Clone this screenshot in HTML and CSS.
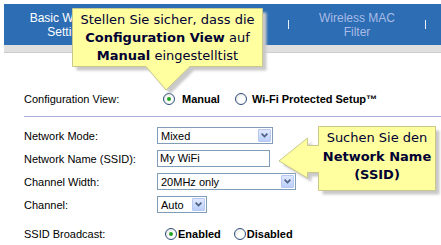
FILE: index.html
```html
<!DOCTYPE html>
<html>
<head>
<meta charset="utf-8">
<link rel="stylesheet" href="styles.css">
</head>
<body>
<div class="header">
  <div class="tabs">
    <div class="tab active">Basic Wireless<br>Settings</div>
    <div class="tab-gap"></div>
    <div class="sep"></div>
    <div class="tab mac">Wireless MAC<br>Filter</div>
    <div class="sep"></div>
  </div>
  <div class="strip"></div>
</div>

<div class="form">
  <div class="row config">
    <div class="label">Configuration View:</div>
    <div class="ctrl">
      <span class="radio on r-manual"></span><span class="opt t-manual">Manual</span>
      <span class="radio r-wps"></span><span class="opt t-wps">Wi-Fi Protected Setup™</span>
    </div>
  </div>
  <div class="rule"></div>
  <div class="row">
    <div class="label">Network Mode:</div>
    <div class="select w-mode"><span>Mixed</span><span class="btn"><svg width="7" height="5" viewBox="0 0 7 5"><path d="M0.6 0.6 L3.5 3.5 L6.4 0.6" stroke="#4d6185" stroke-width="1.7" fill="none"/></svg></span></div>
  </div>
  <div class="row">
    <div class="label">Network Name (SSID):</div>
    <div class="input">My WiFi</div>
  </div>
  <div class="row">
    <div class="label">Channel Width:</div>
    <div class="select w-width"><span>20MHz only</span><span class="btn"><svg width="7" height="5" viewBox="0 0 7 5"><path d="M0.6 0.6 L3.5 3.5 L6.4 0.6" stroke="#4d6185" stroke-width="1.7" fill="none"/></svg></span></div>
  </div>
  <div class="row">
    <div class="label">Channel:</div>
    <div class="select w-chan"><span>Auto</span><span class="btn"><svg width="7" height="5" viewBox="0 0 7 5"><path d="M0.6 0.6 L3.5 3.5 L6.4 0.6" stroke="#4d6185" stroke-width="1.7" fill="none"/></svg></span></div>
  </div>
  <div class="row ssid">
    <div class="label">SSID Broadcast:</div>
    <div class="ctrl">
      <span class="radio on r-en"></span><span class="opt t-en">Enabled</span>
      <span class="radio r-dis"></span><span class="opt t-dis">Disabled</span>
    </div>
  </div>
</div>

<div class="callout c1">
  <svg class="shape" width="200" height="90" viewBox="0 0 200 90">
    <defs><filter id="bl1" x="-10%" y="-10%" width="120%" height="120%"><feGaussianBlur stdDeviation="1"/></filter></defs>
    <path d="M0.5,0.5 H190.5 V58.5 H118 L94,82 L74,58.5 H0.5 Z" transform="translate(4,4)" fill="#c9c9c9" filter="url(#bl1)"/>
    <path d="M0.5,0.5 H190.5 V58.5 H118 L94,82 L74,58.5 H0.5 Z" fill="#ffffa0" stroke="#c8c88c" stroke-width="1"/>
  </svg>
  <div class="c-text c1-text">Stellen Sie sicher, dass die<br><b>Configuration View</b> auf<br><b>Manual</b> eingestelltist</div>
</div>

<div class="callout c2">
  <svg class="shape" width="166" height="74" viewBox="0 0 166 74">
    <defs><filter id="bl2" x="-10%" y="-10%" width="120%" height="120%"><feGaussianBlur stdDeviation="1"/></filter></defs>
    <path d="M43.5,2.5 H160.5 V66.5 H43.5 V48.5 H32.5 V54 L4,37 L32.5,14 V21.5 H43.5 Z" transform="translate(4,4)" fill="#c9c9c9" filter="url(#bl2)"/>
    <path d="M43.5,2.5 H160.5 V66.5 H43.5 V48.5 H32.5 V54 L4,37 L32.5,14 V21.5 H43.5 Z" fill="#ffffa0" stroke="#c8c88c" stroke-width="1"/>
  </svg>
  <div class="c-text c2-text">Suchen Sie den<br><b>Network Name</b><br><b>(SSID)</b></div>
</div>
</body>
</html>
```

FILE: styles.css
```css
html, body {
  margin: 0;
  padding: 0;
}
body {
  width: 441px;
  height: 245px;
  overflow: hidden;
  position: relative;
  background: #fff;
  font-family: "Liberation Sans", Arial, sans-serif;
  font-size: 11px;
  color: #000;
}
.header {
  padding: 4px 0 0 4px;
}
.tabs {
  display: flex;
  align-items: center;
  height: 41px;
  background: #2c6db4;
}
.tab {
  font-size: 12px;
  line-height: 14px;
  text-align: center;
  color: #a9bbe6;
}
.tab.active {
  width: 130px;
  color: #fff;
}
.tab-gap {
  width: 154px;
}
.tab.mac {
  width: 136px;
}
.sep {
  width: 1px;
  height: 9px;
  background: #e8eefa;
}
.strip {
  height: 8px;
  background: #e0e0e0;
  box-sizing: border-box;
  border-bottom: 1px solid #cdcdcd;
}

.form {
  margin-top: 36px;
  padding-left: 24px;
}
.row {
  display: flex;
  align-items: center;
  height: 23px;
}
.row.config {
  height: 20px;
}
.row.ssid {
  margin-top: 6px;
}
.label {
  width: 133px;
  flex: none;
}
.rule {
  height: 1px;
  background: #ababdc;
  margin: 7px 0;
}
.ctrl {
  display: flex;
  align-items: center;
}
.radio {
  width: 12px;
  height: 12px;
  box-sizing: border-box;
  border-radius: 50%;
  border: 1px solid #2f4f7f;
  background: radial-gradient(circle at 60% 60%, #ffffff 30%, #dcdcd4 100%);
  position: relative;
  flex: none;
}
.radio.on::after {
  content: "";
  position: absolute;
  left: 3px;
  top: 3px;
  width: 4px;
  height: 4px;
  border-radius: 50%;
  background: #22a322;
}
.opt {
  font-weight: bold;
}
.r-manual { margin-left: 6px; }
.t-manual { margin-left: 7px; }
.r-wps { margin-left: 15px; }
.t-wps { margin-left: 5px; }
.r-en { margin-left: 8px; }
.t-en { margin-left: 1px; }
.r-dis { margin-left: 13px; }
.t-dis { margin-left: 1px; }

.select {
  height: 17px;
  box-sizing: border-box;
  border: 1px solid #7f9db9;
  background: #fff;
  display: flex;
  align-items: center;
  justify-content: space-between;
  padding-left: 3px;
}
.w-mode { width: 116px; }
.w-width { width: 139px; }
.w-chan { width: 50px; }
.btn {
  width: 13px;
  height: 13px;
  box-sizing: border-box;
  margin-right: 1px;
  border: 1px solid #b7c9f2;
  border-radius: 1px;
  background: linear-gradient(#dfe8fe, #bccffa);
  display: flex;
  align-items: center;
  justify-content: center;
}
.btn svg {
  display: block;
}
.input {
  width: 113px;
  height: 17px;
  box-sizing: border-box;
  border: 1px solid #7f9db9;
  padding-left: 2px;
  line-height: 15px;
}

.callout {
  position: absolute;
}
.callout .shape {
  position: absolute;
  left: 0;
  top: 0;
}
.c1 {
  left: 72px;
  top: 8px;
  width: 200px;
  height: 90px;
}
.c2 {
  left: 275px;
  top: 124px;
  width: 166px;
  height: 74px;
}
.c-text {
  position: absolute;
  font-family: "DejaVu Sans", Verdana, sans-serif;
  font-size: 13px;
  color: #000033;
  text-align: center;
}
.c1-text {
  left: 0;
  top: 3px;
  width: 191px;
  line-height: 18px;
}
.c2-text {
  left: 43px;
  top: 5px;
  width: 118px;
  line-height: 18.5px;
}
```
